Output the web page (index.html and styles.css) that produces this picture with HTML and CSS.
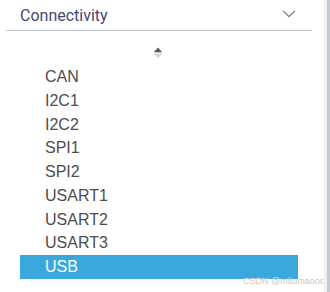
FILE: index.html
```html
<!DOCTYPE html>
<html lang="en">

<head>
    <meta charset="UTF-8">
    <meta name="viewport" content="width=device-width, initial-scale=1.0">
    <title>Connectivity</title>
    <link rel="stylesheet" href="styles.css">
</head>

<body>
    <div class="panel">
        <div class="main">
            <div class="header">
                <span class="title">Connectivity</span>
                <svg class="chevron" width="14" height="8" viewBox="0 0 14 8">
                    <path d="M1 1 L7 6.5 L13 1" fill="none" stroke="#7f8994" stroke-width="1.3" />
                </svg>
            </div>

            <div class="sorter">
                <svg width="10" height="12" viewBox="0 0 10 12">
                    <path d="M5 0.5 L9 5 L1 5 Z" fill="#5c5c5c" />
                    <rect x="1" y="5.3" width="8" height="0.8" fill="#b5b5b5" />
                    <path d="M1 6.8 L9 6.8 L5 11 Z" fill="#d2d2d2" />
                </svg>
            </div>

            <ul class="list">
                <li>CAN</li>
                <li>I2C1</li>
                <li>I2C2</li>
                <li>SPI1</li>
                <li>SPI2</li>
                <li>USART1</li>
                <li>USART2</li>
                <li>USART3</li>
                <li class="selected">USB</li>
            </ul>
        </div>

        <div class="scroll"></div>
        <span class="watermark">CSDN @mitumaooc</span>
    </div>
</body>

</html>
```

FILE: styles.css
```css
body {
    margin: 0;
    background-color: #fff;
    font-family: 'Liberation Sans', Arial, sans-serif;
}

.panel {
    position: relative;
    display: flex;
    width: 330px;
    height: 292px;
    overflow: hidden;
}

.main {
    flex: 1;
}

.header {
    display: flex;
    align-items: center;
    justify-content: space-between;
    margin-left: 6px;
    width: 306px;
    height: 31px;
    border-bottom: 1px solid #bcc5ce;
    box-sizing: border-box;
}

.title {
    padding-left: 14px;
    padding-top: 1px;
    font-family: Roboto, 'Liberation Sans', sans-serif;
    font-size: 16px;
    color: #3f4a6b;
}

.chevron {
    margin-right: 16px;
    margin-bottom: 2px;
}

.sorter {
    display: flex;
    justify-content: center;
    width: 316px;
    height: 34px;
    padding-top: 16px;
    box-sizing: border-box;
}

.list {
    list-style: none;
    margin: 0 0 0 20px;
    padding: 0;
    width: 278px;
}

.list li {
    height: 23.75px;
    line-height: 23.75px;
    padding-left: 25px;
    font-size: 16px;
    color: #4d4d4d;
}

.list li.selected {
    background-color: #3aa8dc;
    color: #fff;
}

.scroll {
    width: 3px;
    border-left: 3px solid #f0f0f0;
    background-color: #c3cbd3;
}

.watermark {
    position: absolute;
    left: 243px;
    top: 276px;
    font-size: 9px;
    color: #c8c8c8;
    white-space: nowrap;
    text-shadow: 0 0 1px #fff;
}
```
